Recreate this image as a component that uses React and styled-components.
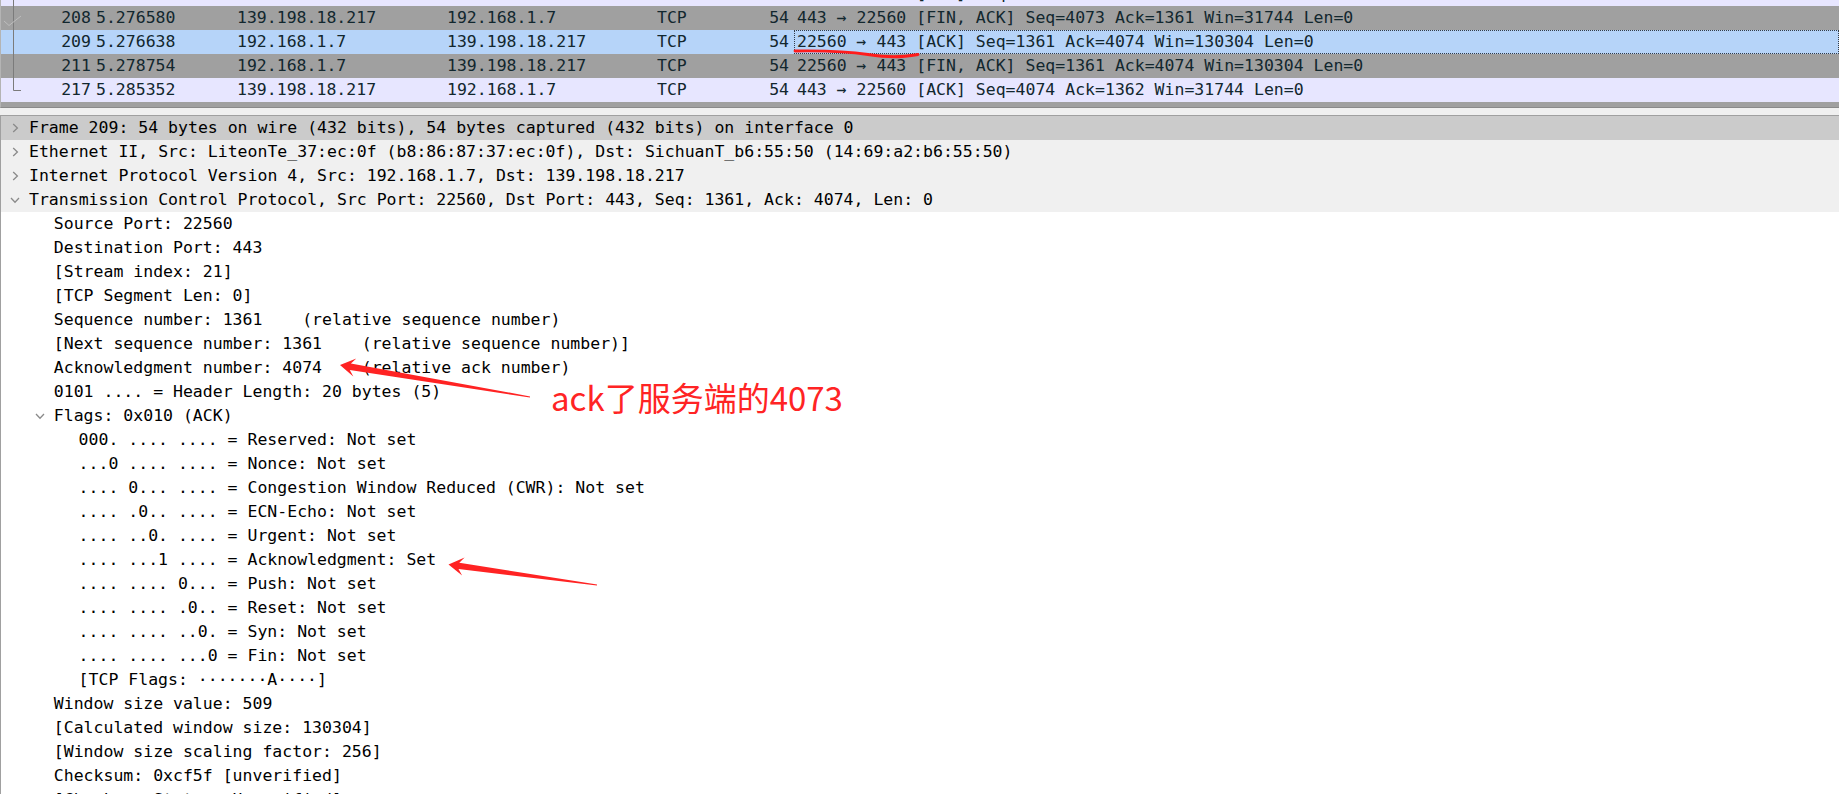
import styled, { createGlobalStyle } from "styled-components";

const GlobalStyle = createGlobalStyle`
  html, body {
    margin: 0;
    padding: 0;
    background: #ffffff;
  }
  body {
    width: 1839px;
    height: 794px;
    overflow: hidden;
  }
`;

const MONO = `"DejaVu Sans Mono", "Liberation Mono", monospace`;

const rowColors = {
  tcp: "#e7e6ff",
  fin: "#a0a0a0",
  selected: "#b6d4f9",
};

const Screen = styled.div`
  position: relative;
  width: 1839px;
  height: 794px;
  overflow: hidden;
  display: flex;
  flex-direction: column;
  background: #ffffff;
  font-family: ${MONO};
  font-size: 16.5px;
`;

const PacketList = styled.div`
  flex: none;
  height: 107px;
  overflow: hidden;
  border-left: 1px solid #b4b4b4;
  border-bottom: 1px solid #8a8a8a;
  color: #12272e;
`;

const PacketRows = styled.div`
  margin-top: -18px;
`;

const PacketRow = styled.div`
  display: grid;
  grid-template-columns: 95px 141px 210px 210px 84px 53px 1fr;
  height: 24px;
  line-height: 24px;
  white-space: pre;
  background: ${(p) => rowColors[p.$kind]};
`;

const NoCell = styled.div`
  display: flex;
  align-items: center;
  justify-content: space-between;
  padding-right: 5px;
`;

const Cell = styled.div`
  overflow: hidden;
`;

const LenCell = styled.div`
  text-align: right;
  padding-right: 5px;
`;

const InfoCell = styled.div`
  padding-left: 3px;
  overflow: hidden;
  outline: ${(p) => (p.$focused ? "1px dotted #333c48" : "none")};
  outline-offset: -1px;
`;

const Splitter = styled.div`
  flex: none;
  height: 7px;
  background: #f0f0f0;
`;

const Details = styled.div`
  flex: 1;
  overflow: hidden;
  border-top: 1px solid #a0a0a0;
  border-left: 1px solid #a0a0a0;
  color: #000000;
`;

const TreeRow = styled.div`
  display: flex;
  align-items: center;
  height: 24px;
  line-height: 24px;
  white-space: pre;
  padding-left: ${(p) => p.$level * 24.8}px;
  background: ${(p) =>
    p.$selected ? "#cbcbcb" : p.$level === 0 ? "#f0f0f0" : "transparent"};
`;

const Toggle = styled.span`
  flex: none;
  width: 28px;
  height: 24px;
  display: flex;
  align-items: center;
  justify-content: center;
`;

const Overlay = styled.svg`
  position: absolute;
  left: 0;
  top: 0;
  pointer-events: none;
`;

const Note = styled.div`
  position: absolute;
  left: 551px;
  top: 379px;
  font-family: "Noto Sans CJK SC", "Noto Sans", sans-serif;
  font-size: 33px;
  line-height: 36px;
  color: #ff2424;
  white-space: nowrap;
`;

const packets = [
  { no: "207", time: "5.276540", src: "139.198.18.217", dst: "192.168.1.7", kind: "tcp", mark: "line",
    info: "443 → 22560 [ACK] Seq=4073 Ack=1361 Win=31744 Len=0" },
  { no: "208", time: "5.276580", src: "139.198.18.217", dst: "192.168.1.7", kind: "fin", mark: "ack",
    info: "443 → 22560 [FIN, ACK] Seq=4073 Ack=1361 Win=31744 Len=0" },
  { no: "209", time: "5.276638", src: "192.168.1.7", dst: "139.198.18.217", kind: "selected", mark: "line", focused: true,
    info: "22560 → 443 [ACK] Seq=1361 Ack=4074 Win=130304 Len=0" },
  { no: "211", time: "5.278754", src: "192.168.1.7", dst: "139.198.18.217", kind: "fin", mark: "line",
    info: "22560 → 443 [FIN, ACK] Seq=1361 Ack=4074 Win=130304 Len=0" },
  { no: "217", time: "5.285352", src: "139.198.18.217", dst: "192.168.1.7", kind: "tcp", mark: "end",
    info: "443 → 22560 [ACK] Seq=4074 Ack=1362 Win=31744 Len=0" },
  { no: "218", time: "5.285901", src: "192.168.1.7", dst: "139.198.18.217", kind: "fin",
    info: "22560 → 443 [RST, ACK] Seq=1362 Ack=4074 Win=0 Len=0" },
];

const tree = [
  { level: 0, toggle: "closed", selected: true,
    text: "Frame 209: 54 bytes on wire (432 bits), 54 bytes captured (432 bits) on interface 0" },
  { level: 0, toggle: "closed",
    text: "Ethernet II, Src: LiteonTe_37:ec:0f (b8:86:87:37:ec:0f), Dst: SichuanT_b6:55:50 (14:69:a2:b6:55:50)" },
  { level: 0, toggle: "closed", text: "Internet Protocol Version 4, Src: 192.168.1.7, Dst: 139.198.18.217" },
  { level: 0, toggle: "open",
    text: "Transmission Control Protocol, Src Port: 22560, Dst Port: 443, Seq: 1361, Ack: 4074, Len: 0" },
  { level: 1, text: "Source Port: 22560" },
  { level: 1, text: "Destination Port: 443" },
  { level: 1, text: "[Stream index: 21]" },
  { level: 1, text: "[TCP Segment Len: 0]" },
  { level: 1, text: "Sequence number: 1361    (relative sequence number)" },
  { level: 1, text: "[Next sequence number: 1361    (relative sequence number)]" },
  { level: 1, text: "Acknowledgment number: 4074    (relative ack number)" },
  { level: 1, text: "0101 .... = Header Length: 20 bytes (5)" },
  { level: 1, toggle: "open", text: "Flags: 0x010 (ACK)" },
  { level: 2, text: "000. .... .... = Reserved: Not set" },
  { level: 2, text: "...0 .... .... = Nonce: Not set" },
  { level: 2, text: ".... 0... .... = Congestion Window Reduced (CWR): Not set" },
  { level: 2, text: ".... .0.. .... = ECN-Echo: Not set" },
  { level: 2, text: ".... ..0. .... = Urgent: Not set" },
  { level: 2, text: ".... ...1 .... = Acknowledgment: Set" },
  { level: 2, text: ".... .... 0... = Push: Not set" },
  { level: 2, text: ".... .... .0.. = Reset: Not set" },
  { level: 2, text: ".... .... ..0. = Syn: Not set" },
  { level: 2, text: ".... .... ...0 = Fin: Not set" },
  { level: 2, text: "[TCP Flags: ·······A····]" },
  { level: 1, text: "Window size value: 509" },
  { level: 1, text: "[Calculated window size: 130304]" },
  { level: 1, text: "[Window size scaling factor: 256]" },
  { level: 1, text: "Checksum: 0xcf5f [unverified]" },
  { level: 1, text: "[Checksum Status: Unverified]" },
];

function RelatedMark({ mark }) {
  return (
    <svg width="24" height="24" viewBox="0 0 24 24">
      {mark === "line" || mark === "ack" ? (
        <path d="M12.5 0 V24" stroke="#7b7b7b" strokeWidth="1" fill="none" />
      ) : null}
      {mark === "end" ? (
        <path d="M12.5 0 V12.5 H20" stroke="#7b7b7b" strokeWidth="1" fill="none" />
      ) : null}
      {mark === "ack" ? (
        <path d="M3 15 L8 19.5 L20 10" stroke="#bdbdbd" strokeWidth="1" fill="none" />
      ) : null}
    </svg>
  );
}

function Chevron({ open }) {
  return open ? (
    <svg width="10" height="7" viewBox="0 0 10 7">
      <path d="M1 1 L5 5.2 L9 1" stroke="#8a8a8a" strokeWidth="1.3" fill="none" />
    </svg>
  ) : (
    <svg width="7" height="10" viewBox="0 0 7 10">
      <path d="M1.2 1 L5.4 5 L1.2 9" stroke="#8a8a8a" strokeWidth="1.3" fill="none" />
    </svg>
  );
}

// tapered annotation arrow, like the ones a screenshot tool draws
function arrowPoints(tail, tip) {
  const head = 15, half = 9, neck = 10.5, neckHalf = 3.2, tailHalf = 0.6;
  const dx = tip[0] - tail[0];
  const dy = tip[1] - tail[1];
  const len = Math.hypot(dx, dy);
  const ux = dx / len, uy = dy / len;
  const nx = -uy, ny = ux;
  const at = (back, side) => [tip[0] - ux * back + nx * side, tip[1] - uy * back + ny * side];
  const pts = [
    tip,
    at(head, half),
    at(neck, neckHalf),
    [tail[0] + nx * tailHalf, tail[1] + ny * tailHalf],
    [tail[0] - nx * tailHalf, tail[1] - ny * tailHalf],
    at(neck, -neckHalf),
    at(head, -half),
  ];
  return pts.map((p) => p.map((v) => v.toFixed(1)).join(",")).join(" ");
}

export default function App() {
  return (
    <Screen>
      <GlobalStyle />
      <PacketList>
        <PacketRows>
          {packets.map((p) => (
            <PacketRow key={p.no} $kind={p.kind}>
              <NoCell>
                <RelatedMark mark={p.mark} />
                <span>{p.no}</span>
              </NoCell>
              <Cell>{p.time}</Cell>
              <Cell>{p.src}</Cell>
              <Cell>{p.dst}</Cell>
              <Cell>TCP</Cell>
              <LenCell>54</LenCell>
              <InfoCell $focused={p.focused}>{p.info}</InfoCell>
            </PacketRow>
          ))}
        </PacketRows>
      </PacketList>
      <Splitter />
      <Details>
        {tree.map((r, i) => (
          <TreeRow key={i} $level={r.level} $selected={r.selected}>
            <Toggle>{r.toggle ? <Chevron open={r.toggle === "open"} /> : null}</Toggle>
            <span>{r.text}</span>
          </TreeRow>
        ))}
      </Details>

      <Overlay width="1839" height="794" viewBox="0 0 1839 794">
        <path
          d="M795 51 C 825 50.5, 848 51.5, 868 54.5 S 900 57.5, 918 54.5"
          stroke="#ff1c1c"
          strokeWidth="2.8"
          strokeLinecap="round"
          fill="none"
        />
        <polygon points={arrowPoints([530, 397], [340, 365])} fill="#ff2323" />
        <polygon points={arrowPoints([597, 585], [448.5, 564.5])} fill="#ff2323" />
      </Overlay>
      <Note>ack了服务端的4073</Note>
    </Screen>
  );
}
